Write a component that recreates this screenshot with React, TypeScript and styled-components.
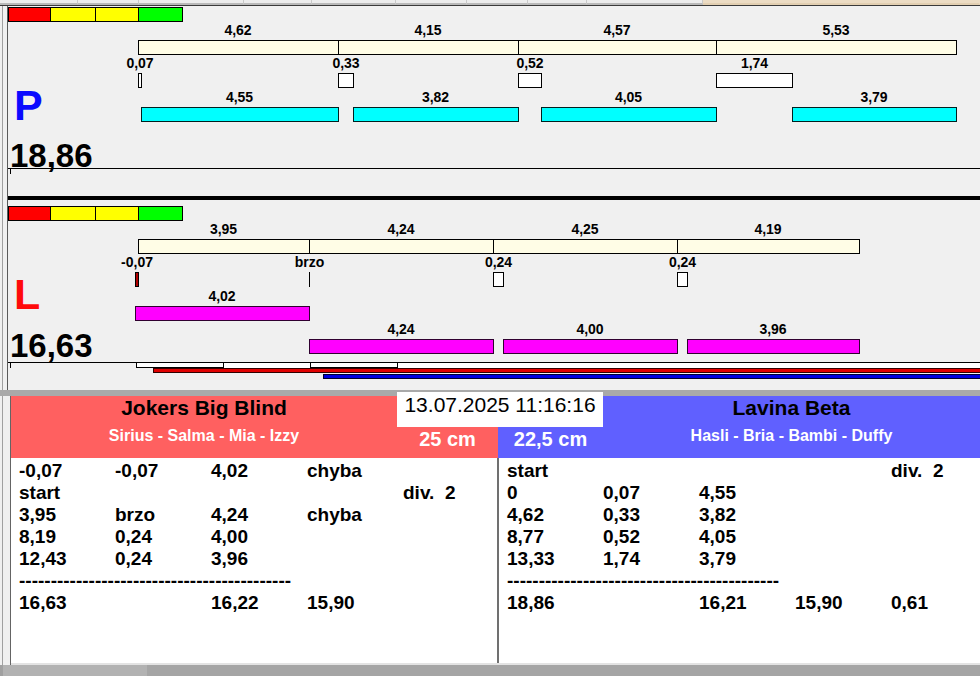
import React from 'react'
import styled, { createGlobalStyle } from 'styled-components'

// pixels per second on the run charts, and where t = 0 sits inside the chart canvas
const SCALE = 43.35
const ORIGIN = 8

type Leg = {
  reaction: number
  reactionLabel: string
  run: number
  runLabel: string
  legLabel: string
  row: 0 | 1
}

type Lane = {
  letter: string
  letterColor: string
  total: string
  runFill: string
  runStroke: string
  stripTop: number
  letterTop: number
  totalGap: number
  legs: Leg[]
}

const lanes: Lane[] = [
  {
    letter: 'P',
    letterColor: '#0a0aff',
    total: '18,86',
    runFill: '#00ffff',
    runStroke: '#002020',
    stripTop: 1,
    letterTop: 62,
    totalGap: 12,
    legs: [
      { reaction: 0.07, reactionLabel: '0,07', run: 4.55, runLabel: '4,55', legLabel: '4,62', row: 0 },
      { reaction: 0.33, reactionLabel: '0,33', run: 3.82, runLabel: '3,82', legLabel: '4,15', row: 0 },
      { reaction: 0.52, reactionLabel: '0,52', run: 4.05, runLabel: '4,05', legLabel: '4,57', row: 0 },
      { reaction: 1.74, reactionLabel: '1,74', run: 3.79, runLabel: '3,79', legLabel: '5,53', row: 0 },
    ],
  },
  {
    letter: 'L',
    letterColor: '#ff0a0a',
    total: '16,63',
    runFill: '#ff00ff',
    runStroke: '#300030',
    stripTop: 6,
    letterTop: 52,
    totalGap: 13,
    legs: [
      { reaction: -0.07, reactionLabel: '-0,07', run: 4.02, runLabel: '4,02', legLabel: '3,95', row: 0 },
      { reaction: 0, reactionLabel: 'brzo', run: 4.24, runLabel: '4,24', legLabel: '4,24', row: 1 },
      { reaction: 0.24, reactionLabel: '0,24', run: 4.0, runLabel: '4,00', legLabel: '4,25', row: 1 },
      { reaction: 0.24, reactionLabel: '0,24', run: 3.96, runLabel: '3,96', legLabel: '4,19', row: 1 },
    ],
  },
]

const stripCells = [
  { color: '#ff0000', w: 41 },
  { color: '#ffff00', w: 44 },
  { color: '#ffff00', w: 42 },
  { color: '#00ff00', w: 43 },
]

const topTabs = [78, 61, 105, 68, 84, 71, 61, 59, 116]

type Team = {
  name: string
  members: string
  length: string
  color: string
  rows: string[][]
}

const DASHES = '-'.repeat(43)

const teams: Team[] = [
  {
    name: 'Jokers Big Blind',
    members: 'Sirius - Salma - Mia - Izzy',
    length: '25 cm',
    color: '#ff6060',
    rows: [
      ['-0,07', '-0,07', '4,02', 'chyba', ''],
      ['start', '', '', '', 'div.  2'],
      ['3,95', 'brzo', '4,24', 'chyba', ''],
      ['8,19', '0,24', '4,00', '', ''],
      ['12,43', '0,24', '3,96', '', ''],
      [DASHES],
      ['16,63', '', '16,22', '15,90', ''],
    ],
  },
  {
    name: 'Lavina Beta',
    members: 'Hasli - Bria - Bambi - Duffy',
    length: '22,5 cm',
    color: '#6060ff',
    rows: [
      ['start', '', '', '', 'div.  2'],
      ['0', '0,07', '4,55', '', ''],
      ['4,62', '0,33', '3,82', '', ''],
      ['8,77', '0,52', '4,05', '', ''],
      ['13,33', '1,74', '3,79', '', ''],
      [DASHES],
      ['18,86', '', '16,21', '15,90', '0,61'],
    ],
  },
]

const GlobalStyle = createGlobalStyle`
  html, body {
    margin: 0;
    padding: 0;
    background: #f0f0f0;
  }
  body {
    font-family: 'Liberation Sans', Arial, sans-serif;
  }
`

const Root = styled.div`
  width: 980px;
  height: 676px;
  overflow: hidden;
  display: flex;
  flex-direction: column;
  background: linear-gradient(90deg, #f0f0f0 0 2px, #a0a0a0 2px 3px, #f0f0f0 3px);
  font-family: 'Liberation Sans', Arial, sans-serif;
  color: #000;
`

const TopStrip = styled.div`
  height: 5px;
  display: flex;
  border-bottom: 1px solid #3a3a3a;
`

const TopTab = styled.div<{ $w?: number; $tan?: boolean }>`
  width: ${(p) => (p.$w ? `${p.$w}px` : 'auto')};
  flex: ${(p) => (p.$tan ? 1 : 'none')};
  box-sizing: border-box;
  background: ${(p) => (p.$tan ? '#ecdcc4' : '#ececec')};
  border-right: 1px solid ${(p) => (p.$tan ? '#ecdcc4' : '#c9c9c9')};
  border-bottom: 2px solid ${(p) => (p.$tan ? '#e2cfb2' : '#b9b9b9')};
`

const ChartSection = styled.div`
  margin-left: 7px;
  border-left: 1px solid #5a5a5a;
  display: flex;
  flex-direction: column;
`

const Panel = styled.section`
  height: 163px;
  box-sizing: border-box;
  border-bottom: 1px solid #000;
  display: flex;
  flex-direction: column;
`

const Strip = styled.div<{ $top: number }>`
  margin-top: ${(p) => p.$top}px;
  align-self: flex-start;
  display: flex;
  height: 13px;
  border: 1px solid #000;
`

const StripCell = styled.div<{ $color: string; $w: number }>`
  width: ${(p) => p.$w}px;
  background: ${(p) => p.$color};
  & + & {
    border-left: 1px solid #000;
  }
`

const PanelBody = styled.div`
  flex: 1;
  min-height: 0;
  display: flex;
`

const Side = styled.div<{ $top: number }>`
  width: 122px;
  flex: none;
  display: flex;
  flex-direction: column;
  padding-top: ${(p) => p.$top}px;
  box-sizing: border-box;
`

const Letter = styled.div<{ $color: string }>`
  font-size: 43px;
  line-height: 43px;
  font-weight: bold;
  color: ${(p) => p.$color};
  padding-left: 6px;
`

const Total = styled.div<{ $gap: number }>`
  margin-top: ${(p) => p.$gap}px;
  font-size: 33px;
  line-height: 33px;
  font-weight: bold;
  padding-left: 2px;
  white-space: nowrap;
`

const ChartCanvas = styled.svg`
  width: 850px;
  height: 100%;
  overflow: visible;
  font-family: 'Liberation Sans', Arial, sans-serif;
  font-size: 14px;
  font-weight: bold;
  fill: #000;
`

const AxisGap = styled.div`
  height: 27px;
`

const Tick = styled.div`
  width: 1px;
  height: 5px;
  margin-left: 2px;
  background: #000;
`

const ThickRule = styled.div`
  height: 4px;
  background: #000;
`

const TimelineCanvas = styled.svg`
  display: block;
  width: 972px;
  height: 17px;
`

const Spacer = styled.div`
  height: 10px;
`

const BandRule = styled.div`
  height: 6px;
  background: #a9a9a9;
`

const Bottom = styled.div`
  margin-left: 10px;
  border-left: 1px solid #646464;
  display: flex;
  flex-direction: column;
`

const HeaderRow = styled.div`
  position: relative;
  height: 62px;
  display: grid;
  grid-template-columns: 487px 1fr;
`

const TeamHeader = styled.div<{ $bg: string; $cols: string }>`
  background: ${(p) => p.$bg};
  display: grid;
  grid-template-columns: ${(p) => p.$cols};
`

const TeamMain = styled.div`
  display: flex;
  flex-direction: column;
  align-items: center;
`

const TeamName = styled.div`
  font-size: 21px;
  line-height: 24px;
  font-weight: bold;
  color: #000;
  white-space: nowrap;
`

const Members = styled.div`
  margin-top: 6px;
  font-size: 16px;
  line-height: 20px;
  font-weight: bold;
  color: #fff;
  white-space: nowrap;
`

const TeamSide = styled.div`
  display: flex;
  flex-direction: column;
  justify-content: flex-end;
  align-items: center;
  padding-bottom: 7px;
`

const Length = styled.div`
  font-size: 20px;
  line-height: 24px;
  font-weight: bold;
  color: #fff;
  white-space: nowrap;
`

const DateBox = styled.div`
  position: absolute;
  left: 386px;
  top: -4px;
  width: 206px;
  height: 35px;
  background: #fff;
  font-size: 21px;
  line-height: 26px;
  text-align: center;
  white-space: nowrap;
`

const ListsRow = styled.div`
  height: 205px;
  display: grid;
  grid-template-columns: 486px 2px 1fr;
`

const Divider = styled.div`
  background: #707070;
`

const ListPane = styled.div`
  display: flex;
  background: #fff;
  min-width: 0;
`

const ListBody = styled.div`
  flex: 1;
  padding: 2px 0 0 8px;
  font-size: 19px;
  line-height: 22px;
  font-weight: bold;
`

const ListRowLine = styled.div`
  display: grid;
  grid-template-columns: repeat(5, 96px);
  white-space: pre;
`

const DashCell = styled.div`
  grid-column: 1 / -1;
  overflow: hidden;
`

const Scroll = styled.div`
  width: 17px;
  flex: none;
  background: #f4f4f4;
  display: flex;
  flex-direction: column;
  justify-content: space-between;
  align-items: center;
  padding: 6px 0 5px;
  box-sizing: border-box;
`

const BottomRule = styled.div`
  height: 2px;
  background: #e3e3e3;
`

const StatusBar = styled.div`
  height: 11px;
  background: linear-gradient(90deg, #a0a0a0 0 3px, #b2b2b2 3px 147px, #a5a5a5 147px);
`

const px = (t: number) => Math.round(ORIGIN + t * SCALE)

function LaneChart({ lane }: { lane: Lane }) {
  let cum = 0
  const parts = lane.legs.map((leg) => {
    const start = cum
    const runStart = start + leg.reaction
    const end = runStart + leg.run
    cum = end
    return { leg, start, runStart, end }
  })

  return (
    <ChartCanvas>
      {parts.map(({ leg, start, runStart, end }, i) => {
        const a = px(start)
        const b = px(end)
        const r1 = px(Math.min(start, runStart))
        const r2 = px(Math.max(start, runStart))
        const s = px(runStart)
        const rowY = leg.row * 33
        return (
          <g key={i} shapeRendering='crispEdges'>
            <rect x={a + 0.5} y={18.5} width={b - a} height={14} fill='#fffde6' stroke='#000' />
            <text x={(a + b) / 2} y={13} textAnchor='middle'>
              {leg.legLabel}
            </text>
            {r2 > r1 ? (
              <rect
                x={r1 + 0.5}
                y={51.5}
                width={r2 - r1}
                height={14}
                fill={leg.reaction < 0 ? '#b00000' : '#fff'}
                stroke='#000'
              />
            ) : (
              <line x1={r1 + 0.5} x2={r1 + 0.5} y1={51} y2={66} stroke='#000' />
            )}
            <text x={(r1 + r2) / 2 + 0.5} y={46} textAnchor='middle'>
              {leg.reactionLabel}
            </text>
            <rect
              x={s + 0.5}
              y={85.5 + rowY}
              width={b - s}
              height={14}
              fill={lane.runFill}
              stroke={lane.runStroke}
            />
            <text x={(s + b) / 2} y={80 + rowY} textAnchor='middle'>
              {leg.runLabel}
            </text>
          </g>
        )
      })}
    </ChartCanvas>
  )
}

function LanePanel({ lane }: { lane: Lane }) {
  return (
    <Panel>
      <Strip $top={lane.stripTop}>
        {stripCells.map((c, i) => (
          <StripCell key={i} $color={c.color} $w={c.w} />
        ))}
      </Strip>
      <PanelBody>
        <Side $top={lane.letterTop}>
          <Letter $color={lane.letterColor}>{lane.letter}</Letter>
          <Total $gap={lane.totalGap}>{lane.total}</Total>
        </Side>
        <LaneChart lane={lane} />
      </PanelBody>
    </Panel>
  )
}

function Timeline() {
  return (
    <TimelineCanvas shapeRendering='crispEdges'>
      <line x1={2.5} x2={2.5} y1={0} y2={5} stroke='#000' />
      <rect x={128} y={0} width={844} height={5} fill='#fff' />
      <rect x={128.5} y={-0.5} width={87} height={5} fill='#fff' stroke='#000' />
      <rect x={302.5} y={-0.5} width={87} height={5} fill='#fff' stroke='#000' />
      <rect x={145.5} y={5.5} width={830} height={4} fill='#e00000' stroke='#300000' />
      <rect x={315.5} y={11.5} width={660} height={4} fill='#0000e0' stroke='#000030' />
    </TimelineCanvas>
  )
}

function Chevron({ up }: { up?: boolean }) {
  return (
    <svg width='9' height='6' viewBox='0 0 9 6'>
      <polyline
        points={up ? '1,5 4.5,1.5 8,5' : '1,1 4.5,4.5 8,1'}
        fill='none'
        stroke='#c2c2c2'
        strokeWidth='1.2'
      />
    </svg>
  )
}

function TeamList({ team }: { team: Team }) {
  return (
    <ListPane>
      <ListBody>
        {team.rows.map((row, i) => (
          <ListRowLine key={i}>
            {row.length === 1 ? (
              <DashCell>{row[0]}</DashCell>
            ) : (
              row.map((cell, j) => <div key={j}>{cell}</div>)
            )}
          </ListRowLine>
        ))}
      </ListBody>
      <Scroll>
        <Chevron up />
        <Chevron />
      </Scroll>
    </ListPane>
  )
}

export default function App() {
  const [left, right] = teams
  return (
    <Root>
      <GlobalStyle />
      <TopStrip>
        {topTabs.map((w, i) => (
          <TopTab key={i} $w={w} />
        ))}
        <TopTab $tan />
      </TopStrip>
      <ChartSection>
        <LanePanel lane={lanes[0]} />
        <AxisGap>
          <Tick />
        </AxisGap>
        <ThickRule />
        <LanePanel lane={lanes[1]} />
        <Timeline />
        <Spacer />
      </ChartSection>
      <BandRule />
      <Bottom>
        <HeaderRow>
          <TeamHeader $bg={left.color} $cols='1fr 101px'>
            <TeamMain>
              <TeamName>{left.name}</TeamName>
              <Members>{left.members}</Members>
            </TeamMain>
            <TeamSide>
              <Length>{left.length}</Length>
            </TeamSide>
          </TeamHeader>
          <TeamHeader $bg={right.color} $cols='105px 1fr'>
            <TeamSide>
              <Length>{right.length}</Length>
            </TeamSide>
            <TeamMain>
              <TeamName>{right.name}</TeamName>
              <Members>{right.members}</Members>
            </TeamMain>
          </TeamHeader>
          <DateBox>13.07.2025 11:16:16</DateBox>
        </HeaderRow>
        <ListsRow>
          <TeamList team={left} />
          <Divider />
          <TeamList team={right} />
        </ListsRow>
        <BottomRule />
      </Bottom>
      <StatusBar />
    </Root>
  )
}
